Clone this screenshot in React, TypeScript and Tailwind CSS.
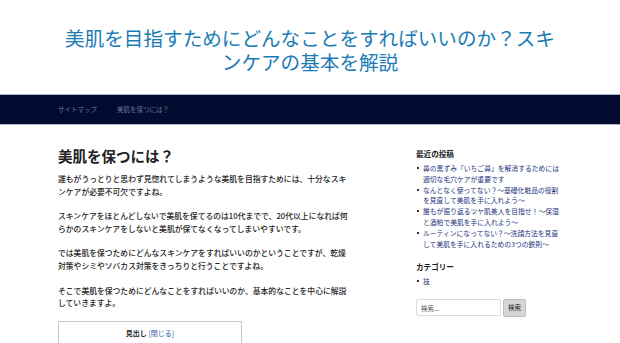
const jp = "font-['Noto_Sans_CJK_JP','Noto_Sans',sans-serif]";

const posts: [string, string][] = [
  ["鼻の黒ずみ「いちご鼻」を解消するためには", "適切な毛穴ケアが重要です"],
  ["なんとなく使ってない？～基礎化粧品の役割", "を見直して美肌を手に入れよう～"],
  ["誰もが振り返るツヤ肌美人を目指せ！～保湿", "と酒粕で美肌を手に入れよう～"],
  ["ルーティンになってない？～洗顔方法を見直", "して美肌を手に入れるための3つの鉄則～"],
];

const paragraphs: [string, string][] = [
  ["誰もがうっとりと思わず見惚れてしまうような美肌を目指すためには、十分なスキ", "ンケアが必要不可欠ですよね。"],
  ["スキンケアをほとんどしないで美肌を保てるのは10代までで、20代以上になれば何", "らかのスキンケアをしないと美肌が保てなくなってしまいやすいです。"],
  ["では美肌を保つためにどんなスキンケアをすればいいのかということですが、乾燥", "対策やシミやソバカス対策をきっちりと行うことですよね。"],
  ["そこで美肌を保つためにどんなことをすればいいのか、基本的なことを中心に解説", "していきますよ。"],
];

function Header() {
  return (
    <header className="pt-[26px] pb-[20px]">
      <h1 className="mx-auto w-[504px] text-center text-[19.6px] leading-[24px] font-normal text-[#1b7bb5]">
        美肌を目指すためにどんなことをすればいいのか？スキンケアの基本を解説
      </h1>
    </header>
  );
}

function Nav() {
  return (
    <nav className="border-y border-[#aeb6d0] bg-[#040b31]">
      <div className="mx-auto flex h-[29px] w-[504px] items-center gap-[20px] text-[6.5px] text-[#6c7598]">
        <span>サイトマップ</span>
        <span>美肌を保つには？</span>
      </div>
    </nav>
  );
}

function Article() {
  return (
    <main className="w-[300px]">
      <h2 className="text-[14.5px] leading-[18px] font-bold text-[#222]">美肌を保つには？</h2>
      <div className="mt-[8px] flex flex-col gap-[12px]">
        {paragraphs.map(([a, b]) => (
          <p key={a} className="whitespace-nowrap text-[7.8px] leading-[12.6px] font-medium text-[#1e1e1e]">
            {a}
            <br />
            {b}
          </p>
        ))}
      </div>
      <div className="mt-[11px] w-[184px] border border-[#c9c9c9] pt-[5px] pb-[10px] text-center text-[7px] leading-[12px]">
        <span className="font-bold text-[#222]">見出し</span>{" "}
        <span className="text-[#2a58a8]">[閉じる]</span>
      </div>
    </main>
  );
}

function Sidebar() {
  return (
    <aside className="w-[146px] pt-[1px]">
      <h3 className="text-[7.6px] leading-[11px] font-bold text-[#222]">最近の投稿</h3>
      <ul className="mt-[4px]">
        {posts.map(([a, b]) => (
          <li key={a} className="flex text-[6.8px] leading-[10.8px] text-[#24337e]">
            <span className="mt-[4px] mr-[4px] ml-[1px] h-[2px] w-[2px] shrink-0 bg-[#333]" />
            <span className="whitespace-nowrap">
              {a}
              <br />
              {b}
            </span>
          </li>
        ))}
      </ul>
      <h3 className="mt-[12px] text-[7.6px] leading-[11px] font-bold text-[#222]">カテゴリー</h3>
      <ul className="mt-[4px]">
        <li className="flex text-[6.8px] leading-[10.8px] text-[#24337e]">
          <span className="mt-[4px] mr-[4px] ml-[1px] h-[2px] w-[2px] shrink-0 bg-[#333]" />
          <span>技</span>
        </li>
      </ul>
      <form className="mt-[12px] flex gap-[2px]">
        <input
          placeholder="検索..."
          className="h-[17px] w-[85px] rounded-[2px] border border-[#dcdcdc] px-[4px] text-[6.5px] text-[#333] placeholder:text-[#555] outline-none"
        />
        <button
          type="button"
          className="h-[18px] w-[23px] -mt-[0.5px] rounded-[2px] border border-[#bdbdbd] bg-[#d6d6d6] text-[6.5px] text-[#222]"
        >
          検索
        </button>
      </form>
    </aside>
  );
}

export default function App() {
  return (
    <div className={`h-[343px] w-[620px] overflow-hidden bg-white ${jp}`}>
      <Header />
      <Nav />
      <div className="mx-auto flex w-[504px] justify-between pt-[22px]">
        <Article />
        <Sidebar />
      </div>
    </div>
  );
}
